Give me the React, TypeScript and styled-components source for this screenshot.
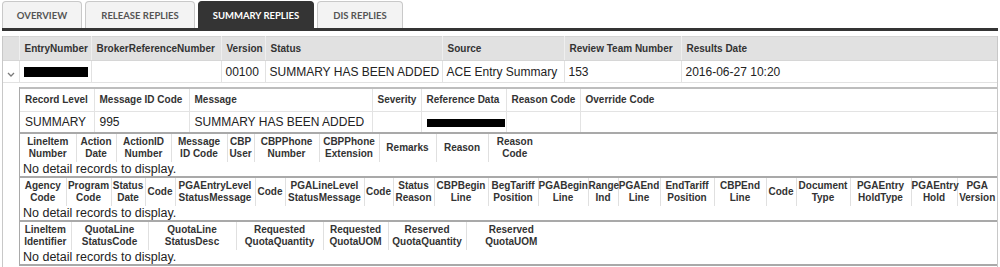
import React from "react";
import styled, { createGlobalStyle } from "styled-components";

const GlobalStyle = createGlobalStyle`
  html, body { margin: 0; padding: 0; background: #fff; }
  body { font-family: "Liberation Sans", Arial, sans-serif; color: #222; }
  th, td { box-sizing: border-box; }
`;

const Page = styled.div`
  padding: 0 2px;
  width: 996px;
`;

const TabBar = styled.div`
  display: flex;
  gap: 3px;
  padding-top: 1px;
  border-bottom: 3px solid #343434;
`;

const Tab = styled.div<{ $w: number; $active?: boolean }>`
  width: ${(p) => p.$w}px;
  height: 27px;
  box-sizing: border-box;
  display: flex;
  align-items: center;
  justify-content: center;
  border: 1px solid ${(p) => (p.$active ? "#343434" : "#c9c9c9")};
  border-bottom: none;
  border-radius: 4px 4px 0 0;
  background: ${(p) => (p.$active ? "#343434" : "#f3f3f3")};
  color: ${(p) => (p.$active ? "#fff" : "#555")};
  font-family: Lato, "Open Sans", sans-serif;
  font-weight: 700;
  font-size: 9.5px;
`;

const Grid = styled.div`
  margin-top: 5px;
  border-left: 1px solid #c8c8c8;
  border-right: 1px solid #c8c8c8;
`;

const MainTable = styled.table`
  width: 100%;
  table-layout: fixed;
  border-collapse: collapse;
  border-top: 1px solid #d4d4d4;
`;

const HeadCell = styled.th<{ $w?: number }>`
  width: ${(p) => (p.$w ? `${p.$w}px` : "auto")};
  height: 24px;
  padding: 0 5px;
  background: #e1e1e1;
  border-right: 1px solid #efefef;
  border-bottom: 1px solid #d6d6d6;
  font-size: 10px;
  font-weight: 700;
  color: #333;
  text-align: left;
  white-space: nowrap;
  overflow: hidden;
  &:last-child { border-right: none; }
`;

const DataCell = styled.td`
  height: 22px;
  padding: 0 4px;
  border-right: 1px solid #e2e2e2;
  border-bottom: 1px solid #e2e2e2;
  font-size: 12px;
  color: #222;
  white-space: nowrap;
  &:last-child { border-right: none; }
`;

const ExpandCell = styled.td`
  padding: 0;
  text-align: center;
  vertical-align: middle;
  border-right: 1px solid #e2e2e2;
  border-bottom: 1px solid #e2e2e2;
`;

const DetailCell = styled.td`
  padding: 4px 0 1px 0;
`;

const Redacted = styled.span<{ $w: number; $h: number }>`
  display: inline-block;
  width: ${(p) => p.$w}px;
  height: ${(p) => p.$h}px;
  background: #000;
  vertical-align: middle;
`;

const DetailBox = styled.div`
  border-left: 1px solid #a9a9a9;
`;

const MessageTable = styled.table`
  width: 100%;
  table-layout: fixed;
  border-collapse: collapse;
  border-top: 2px solid #bdbdbd;
  border-bottom: 2px solid #a9a9a9;
`;

const MsgHead = styled.th<{ $w?: number }>`
  width: ${(p) => (p.$w ? `${p.$w}px` : "auto")};
  height: 23px;
  padding: 0 5px;
  background: #fff;
  border-right: 1px solid #e3e3e3;
  border-bottom: 1px solid #e3e3e3;
  font-size: 10px;
  font-weight: 700;
  color: #333;
  text-align: left;
  white-space: nowrap;
  &:last-child { border-right: none; }
`;

const MsgCell = styled.td`
  height: 22px;
  padding: 0 5px;
  border-right: 1px solid #e3e3e3;
  font-size: 12px;
  color: #222;
  white-space: nowrap;
  &:last-child { border-right: none; }
`;

const SubBlock = styled.div`
  border-bottom: 2px solid #a9a9a9;
`;

const SubTable = styled.table<{ $width: number }>`
  width: ${(p) => p.$width}px;
  table-layout: fixed;
  border-collapse: collapse;
`;

const SubHead = styled.th<{ $w: number }>`
  width: ${(p) => p.$w}px;
  height: 28px;
  padding: 0;
  font-size: 10px;
  line-height: 12px;
  font-weight: 700;
  color: #333;
  text-align: center;
  vertical-align: middle;
  white-space: nowrap;
  &:not(:first-child) { border-left: 1px solid #e0e0e0; }
`;

const EmptyCell = styled.td`
  padding: 0 3px;
  height: 14px;
  line-height: 14px;
  font-size: 12.5px;
  color: #222;
  text-align: left;
  white-space: nowrap;
  overflow: visible;
`;

const Chevron = () => (
  <svg width="8" height="5" viewBox="0 0 8 5">
    <path d="M1 1 L4 4 L7 1" fill="none" stroke="#7a7a7a" strokeWidth="1.3" />
  </svg>
);

type Col = { label: string[]; w: number };

const actionCols: Col[] = [
  { label: ["LineItem", "Number"], w: 56 },
  { label: ["Action", "Date"], w: 40 },
  { label: ["ActionID", "Number"], w: 55 },
  { label: ["Message", "ID Code"], w: 56 },
  { label: ["CBP", "User"], w: 27 },
  { label: ["CBPPhone", "Number"], w: 65 },
  { label: ["CBPPhone", "Extension"], w: 60 },
  { label: ["Remarks"], w: 57 },
  { label: ["Reason"], w: 52 },
  { label: ["Reason", "Code"], w: 53 },
];

const pgaCols: Col[] = [
  { label: ["Agency", "Code"], w: 46 },
  { label: ["Program", "Code"], w: 45 },
  { label: ["Status", "Date"], w: 34 },
  { label: ["Code"], w: 30 },
  { label: ["PGAEntryLevel", "StatusMessage"], w: 80 },
  { label: ["Code"], w: 30 },
  { label: ["PGALineLevel", "StatusMessage"], w: 79 },
  { label: ["Code"], w: 29 },
  { label: ["Status", "Reason"], w: 41 },
  { label: ["CBPBegin", "Line"], w: 54 },
  { label: ["BegTariff", "Position"], w: 50 },
  { label: ["PGABegin", "Line"], w: 50 },
  { label: ["Range", "Ind"], w: 30 },
  { label: ["PGAEnd", "Line"], w: 42 },
  { label: ["EndTariff", "Position"], w: 54 },
  { label: ["CBPEnd", "Line"], w: 52 },
  { label: ["Code"], w: 30 },
  { label: ["Document", "Type"], w: 54 },
  { label: ["PGAEntry", "HoldType"], w: 61 },
  { label: ["PGAEntry", "Hold"], w: 46 },
  { label: ["PGA", "Version"], w: 40 },
];

const quotaCols: Col[] = [
  { label: ["LineItem", "Identifier"], w: 51 },
  { label: ["QuotaLine", "StatusCode"], w: 77 },
  { label: ["QuotaLine", "StatusDesc"], w: 88 },
  { label: ["Requested", "QuotaQuantity"], w: 87 },
  { label: ["Requested", "QuotaUOM"], w: 65 },
  { label: ["Reserved", "QuotaQuantity"], w: 78 },
  { label: ["Reserved", "QuotaUOM"], w: 90 },
];

function DetailGrid({ cols }: { cols: Col[] }) {
  const total = cols.reduce((sum, c) => sum + c.w, 0);
  return (
    <SubBlock>
      <SubTable $width={total}>
        <thead>
          <tr>
            {cols.map((c, i) => (
              <SubHead key={i} $w={c.w}>
                {c.label.map((l, j) => (
                  <React.Fragment key={j}>
                    {j > 0 && <br />}
                    {l}
                  </React.Fragment>
                ))}
              </SubHead>
            ))}
          </tr>
        </thead>
        <tbody>
          <tr>
            <EmptyCell colSpan={cols.length}>No detail records to display.</EmptyCell>
          </tr>
        </tbody>
      </SubTable>
    </SubBlock>
  );
}

export default function App() {
  return (
    <>
      <GlobalStyle />
      <Page>
        <TabBar>
          <Tab $w={80}>OVERVIEW</Tab>
          <Tab $w={110}>RELEASE REPLIES</Tab>
          <Tab $w={116} $active>SUMMARY REPLIES</Tab>
          <Tab $w={86}>DIS REPLIES</Tab>
        </TabBar>
        <Grid>
          <MainTable>
            <thead>
              <tr>
                <HeadCell $w={16} />
                <HeadCell $w={72}>EntryNumber</HeadCell>
                <HeadCell $w={130}>BrokerReferenceNumber</HeadCell>
                <HeadCell $w={44}>Version</HeadCell>
                <HeadCell $w={177}>Status</HeadCell>
                <HeadCell $w={122}>Source</HeadCell>
                <HeadCell $w={117}>Review Team Number</HeadCell>
                <HeadCell>Results Date</HeadCell>
              </tr>
            </thead>
            <tbody>
              <tr>
                <ExpandCell><Chevron /></ExpandCell>
                <DataCell><Redacted $w={64} $h={10} /></DataCell>
                <DataCell />
                <DataCell>00100</DataCell>
                <DataCell>SUMMARY HAS BEEN ADDED</DataCell>
                <DataCell>ACE Entry Summary</DataCell>
                <DataCell>153</DataCell>
                <DataCell>2016-06-27 10:20</DataCell>
              </tr>
              <tr>
                <td />
                <DetailCell colSpan={7}>
                  <DetailBox>
                    <MessageTable>
                      <thead>
                        <tr>
                          <MsgHead $w={74}>Record Level</MsgHead>
                          <MsgHead $w={95}>Message ID Code</MsgHead>
                          <MsgHead $w={183}>Message</MsgHead>
                          <MsgHead $w={49}>Severity</MsgHead>
                          <MsgHead $w={85}>Reference Data</MsgHead>
                          <MsgHead $w={74}>Reason Code</MsgHead>
                          <MsgHead>Override Code</MsgHead>
                        </tr>
                      </thead>
                      <tbody>
                        <tr>
                          <MsgCell>SUMMARY</MsgCell>
                          <MsgCell>995</MsgCell>
                          <MsgCell>SUMMARY HAS BEEN ADDED</MsgCell>
                          <MsgCell />
                          <MsgCell><Redacted $w={78} $h={8} /></MsgCell>
                          <MsgCell />
                          <MsgCell />
                        </tr>
                      </tbody>
                    </MessageTable>
                    <DetailGrid cols={actionCols} />
                    <DetailGrid cols={pgaCols} />
                    <DetailGrid cols={quotaCols} />
                  </DetailBox>
                </DetailCell>
              </tr>
            </tbody>
          </MainTable>
        </Grid>
      </Page>
    </>
  );
}
